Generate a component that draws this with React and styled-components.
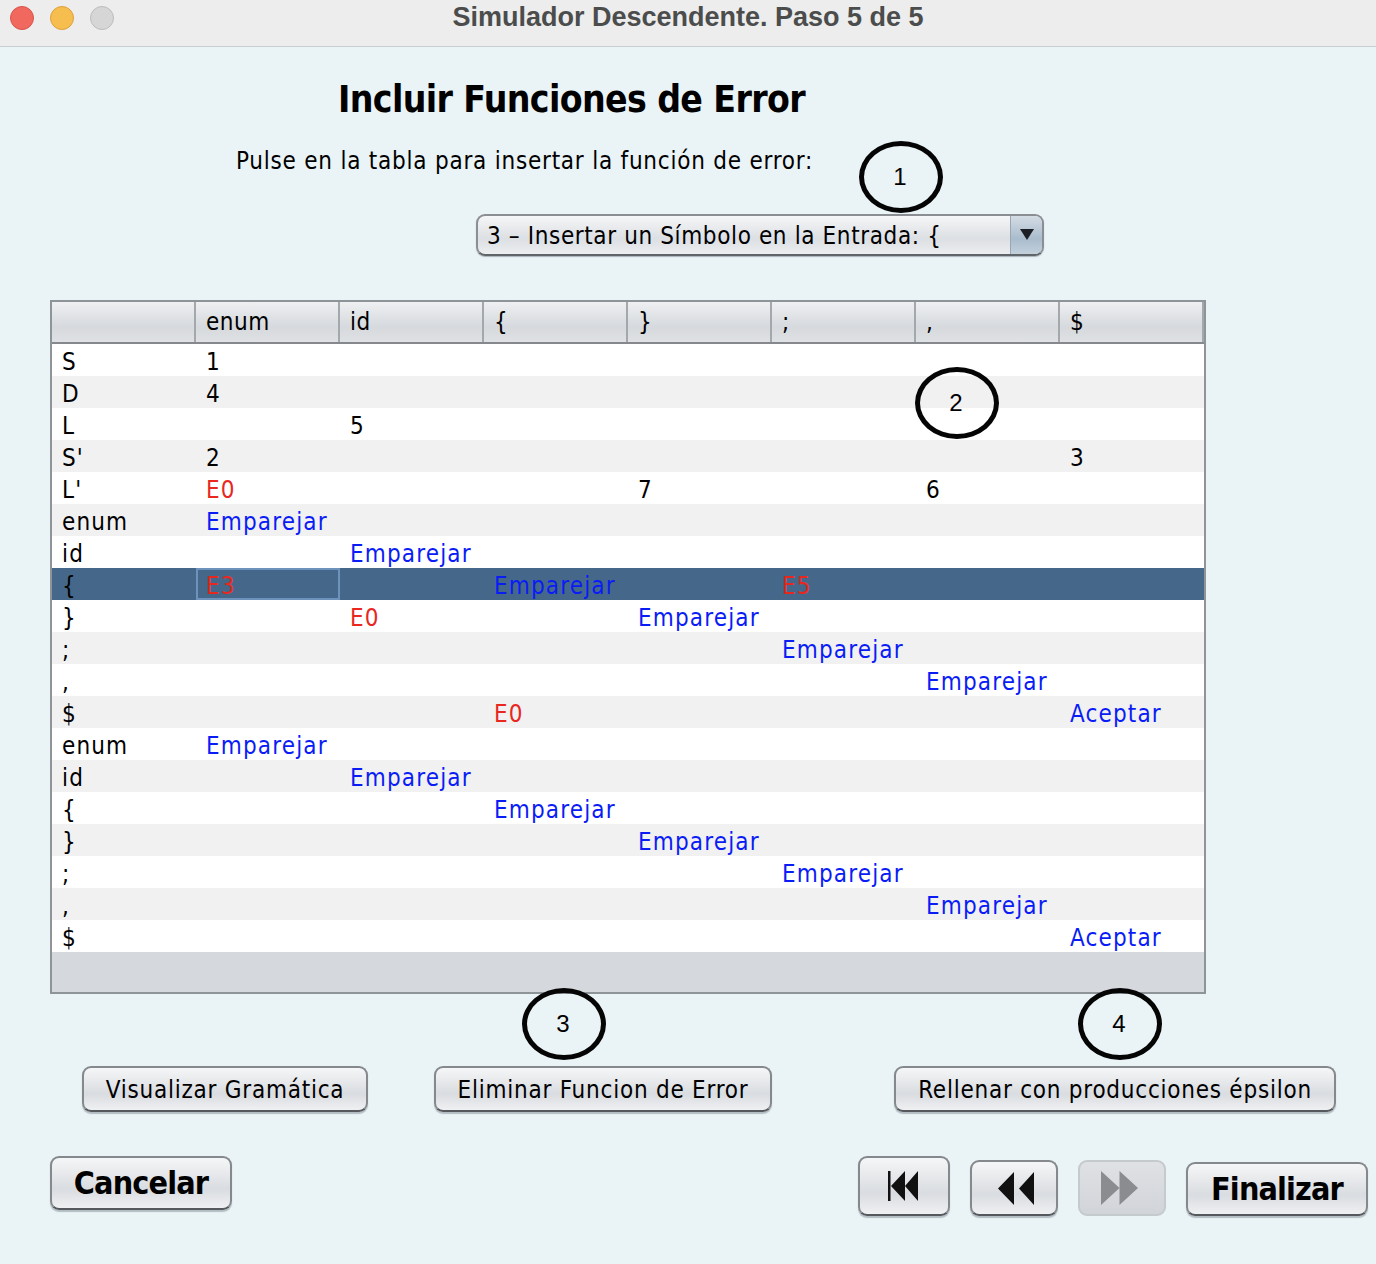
import React from 'react'
import styled, { createGlobalStyle } from 'styled-components'

const GlobalStyle = createGlobalStyle`
  html, body { margin: 0; padding: 0; background: #eaf3f5; }
  * { box-sizing: border-box; }
`

const UI_FONT = `"DejaVu Sans Condensed", "DejaVu Sans", sans-serif`

const Page = styled.div`
  position: relative;
  width: 1376px;
  height: 1264px;
  background: #eaf3f5;
  color: #000;
  font-family: ${UI_FONT};
  overflow: hidden;
`

const TitleBar = styled.div`
  height: 47px;
  background: #ecedec;
  border-bottom: 1px solid #c9ced1;
  position: relative;
  display: flex;
  align-items: center;
  justify-content: center;
  padding-bottom: 12px;
  font: bold 27px "Liberation Sans", sans-serif;
  color: #4b4c4c;
`

const Lights = styled.div`
  position: absolute;
  left: 10px;
  top: 6px;
  display: flex;
  gap: 16px;
`

const Light = styled.span`
  width: 24px;
  height: 24px;
  border-radius: 50%;
  background: ${p => p.$fill};
  border: 1px solid ${p => p.$edge};
`

const Heading = styled.h1`
  margin: 30px 0 0 338px;
  height: 46px;
  line-height: 46px;
  font-size: 37px;
  font-weight: bold;
  letter-spacing: -0.62px;
  white-space: nowrap;
`

const Prompt = styled.div`
  margin: 23px 0 0 236px;
  height: 30px;
  line-height: 30px;
  font-size: 24px;
  letter-spacing: 0.77px;
  white-space: nowrap;
`

const Combo = styled.div`
  margin: 38px 0 0 476px;
  width: 568px;
  height: 42px;
  display: flex;
  border: 2px solid #8b8f93;
  border-bottom-color: #5f6569;
  border-radius: 9px;
  overflow: hidden;
  background: linear-gradient(#f5f6f7 0%, #dcdfe3 60%, #eceef0 100%);
  box-shadow: 0 1px 1px rgba(90, 100, 110, 0.45);
`

const ComboText = styled.div`
  flex: 1;
  padding-left: 9px;
  line-height: 41px;
  font-size: 24px;
  letter-spacing: 0.62px;
  white-space: nowrap;
`

const ComboArrow = styled.div`
  width: 32px;
  display: flex;
  align-items: center;
  justify-content: center;
  border-left: 1px solid #9aa6b2;
  background: linear-gradient(#d4dce4 0%, #a9bccd 60%, #c3d0dc 100%);
  svg { display: block; margin-bottom: 2px; }
`

const Table = styled.div`
  margin: 44px 0 0 50px;
  width: 1156px;
  height: 694px;
  border: 2px solid #8f9499;
  background: #d5d8dd;
`

const Grid = styled.div`
  display: grid;
  grid-template-columns: repeat(8, 144px);
  height: ${p => p.$h}px;
  background: ${p => p.$bg};
`

const HeaderRow = styled(Grid)`
  background: linear-gradient(#eef0f2 0%, #d6d9dd 62%, #dfe1e4 100%);
  border-bottom: 2px solid #85898d;
`

const HeaderCell = styled.div`
  padding-left: 10px;
  line-height: 40px;
  font-size: 24px;
  letter-spacing: 0.5px;
  border-right: 2px solid #a4a8ac;
`

const Cell = styled.div`
  padding-left: ${p => (p.$focus ? 8 : 10)}px;
  line-height: ${p => (p.$focus ? 32 : 36)}px;
  height: 32px;
  font-size: 24px;
  letter-spacing: 1.15px;
  white-space: nowrap;
  color: ${p => p.$color};
  border: ${p => (p.$focus ? '2px solid #6d93bd' : 'none')};
`

const ButtonBase = styled.div`
  display: flex;
  align-items: center;
  justify-content: center;
  height: ${p => p.$h}px;
  width: ${p => p.$w}px;
  border: 2px solid #85898d;
  border-bottom-color: #55595d;
  border-radius: 9px;
  background: linear-gradient(#f5f6f7 0%, #d9dce0 62%, #eff0f2 100%);
  box-shadow: 0 2px 1px rgba(110, 125, 135, 0.45);
  white-space: nowrap;
`

const TextButton = styled(ButtonBase)`
  font-size: 24px;
  letter-spacing: 0.76px;
  padding-top: 2px;
`

const BigButton = styled(ButtonBase)`
  font-size: 32px;
  font-weight: bold;
  letter-spacing: -0.85px;
`

const IconButton = styled(ButtonBase)`
  padding-left: ${p => p.$padL || 0}px;
  padding-right: ${p => p.$padR || 0}px;
  svg { display: block; }
`

const DisabledButton = styled(IconButton)`
  border-color: #c5cacd;
  background: linear-gradient(#dfe1e4, #d1d4d9);
  box-shadow: none;
`

const ActionRow = styled.div`
  margin: 72px 0 0 82px;
  display: flex;
  gap: 66px;
  & > :last-child { margin-left: 56px; }
`

const NavBar = styled.div`
  margin: 44px 0 0 50px;
  width: 1318px;
  display: flex;
  align-items: flex-start;
  justify-content: space-between;
`

const NavGroup = styled.div`
  display: flex;
  gap: 20px;
  align-items: flex-end;
  height: 60px;
`

const Badge = styled.div`
  position: absolute;
  left: ${p => p.$x}px;
  top: ${p => p.$y}px;
  width: 84px;
  height: 72px;
  border: 5px solid #050505;
  border-radius: 50%;
  display: flex;
  align-items: center;
  justify-content: center;
  padding-right: 2px;
  font: 24px "Liberation Sans", sans-serif;
`

const HEAD = ['', 'enum', 'id', '{', '}', ';', ',', '$']
const E = 'Emparejar'
const A = 'Aceptar'

// fila: etiqueta y celdas por columna
const ROWS = [
  ['S', { 1: '1' }],
  ['D', { 1: '4' }],
  ['L', { 2: '5' }],
  ["S'", { 1: '2', 7: '3' }],
  ["L'", { 1: 'E0', 4: '7', 6: '6' }],
  ['enum', { 1: E }],
  ['id', { 2: E }],
  ['{', { 1: 'E3', 3: E, 5: 'E5' }],
  ['}', { 2: 'E0', 4: E }],
  [';', { 5: E }],
  [',', { 6: E }],
  ['$', { 3: 'E0', 7: A }],
  ['enum', { 1: E }],
  ['id', { 2: E }],
  ['{', { 3: E }],
  ['}', { 4: E }],
  [';', { 5: E }],
  [',', { 6: E }],
  ['$', { 7: A }],
]

const SELECTED = 7

function colorOf(text) {
  if (text === E || text === A) return '#0a1cf6'
  if (/^E\d/.test(text)) return '#e8281e'
  return '#000'
}

function rowBackground(i) {
  if (i === SELECTED) return '#45688a'
  return i % 2 === 0 ? '#ffffff' : '#f1f1f2'
}

const First = ({ fill }) => (
  <svg width="30" height="30" viewBox="0 0 30 30" fill={fill}>
    <rect x="0" y="0" width="2.5" height="30" />
    <path d="M17 0v30L3 15zM30 0v30L17 15z" />
  </svg>
)

const Prev = ({ fill }) => (
  <svg width="36" height="33" viewBox="0 0 36 33" fill={fill}>
    <path d="M16 0v33L0 16.5zM36 0v33L21 16.5z" />
  </svg>
)

const Next = ({ fill }) => (
  <svg width="37" height="34" viewBox="0 0 37 34" fill={fill}>
    <path d="M0 0v34l18.5-17zM18.5 0v34l18.5-17z" />
  </svg>
)

export default function App() {
  return (
    <Page>
      <GlobalStyle />
      <TitleBar>
        <Lights>
          <Light $fill="#f0685e" $edge="#d9534a" />
          <Light $fill="#f6bd4f" $edge="#dfa03a" />
          <Light $fill="#d5d6d5" $edge="#bcbdbc" />
        </Lights>
        Simulador Descendente. Paso 5 de 5
      </TitleBar>

      <Heading>Incluir Funciones de Error</Heading>
      <Prompt>Pulse en la tabla para insertar la función de error:</Prompt>

      <Combo>
        <ComboText>3 – Insertar un Símbolo en la Entrada: {'{'}</ComboText>
        <ComboArrow>
          <svg width="14" height="11" viewBox="0 0 14 11"><path d="M0 0h14L7 11z" fill="#1c2024" /></svg>
        </ComboArrow>
      </Combo>

      <Table>
        <HeaderRow $h={42}>
          {HEAD.map((h, i) => <HeaderCell key={i}>{h}</HeaderCell>)}
        </HeaderRow>
        {ROWS.map(([label, cells], r) => (
          <Grid key={r} $h={32} $bg={rowBackground(r)}>
            <Cell $color="#000">{label}</Cell>
            {[1, 2, 3, 4, 5, 6, 7].map(c => (
              <Cell
                key={c}
                $color={colorOf(cells[c] || '')}
                $focus={r === SELECTED && c === 1}
              >
                {cells[c] || ''}
              </Cell>
            ))}
          </Grid>
        ))}
      </Table>

      <ActionRow>
        <TextButton $w={286} $h={46}>Visualizar Gramática</TextButton>
        <TextButton $w={338} $h={46}>Eliminar Funcion de Error</TextButton>
        <TextButton $w={442} $h={46}>Rellenar con producciones épsilon</TextButton>
      </ActionRow>

      <NavBar>
        <BigButton $w={182} $h={54}>Cancelar</BigButton>
        <NavGroup>
          <IconButton $w={92} $h={60} $padR={2}><First fill="#111" /></IconButton>
          <IconButton $w={88} $h={56} $padL={4}><Prev fill="#111" /></IconButton>
          <DisabledButton $w={88} $h={56} $padR={5}><Next fill="#8a8c8f" /></DisabledButton>
          <BigButton $w={182} $h={54}>Finalizar</BigButton>
        </NavGroup>
      </NavBar>

      <Badge $x={859} $y={141}>1</Badge>
      <Badge $x={915} $y={367}>2</Badge>
      <Badge $x={522} $y={988}>3</Badge>
      <Badge $x={1078} $y={988}>4</Badge>
    </Page>
  )
}
